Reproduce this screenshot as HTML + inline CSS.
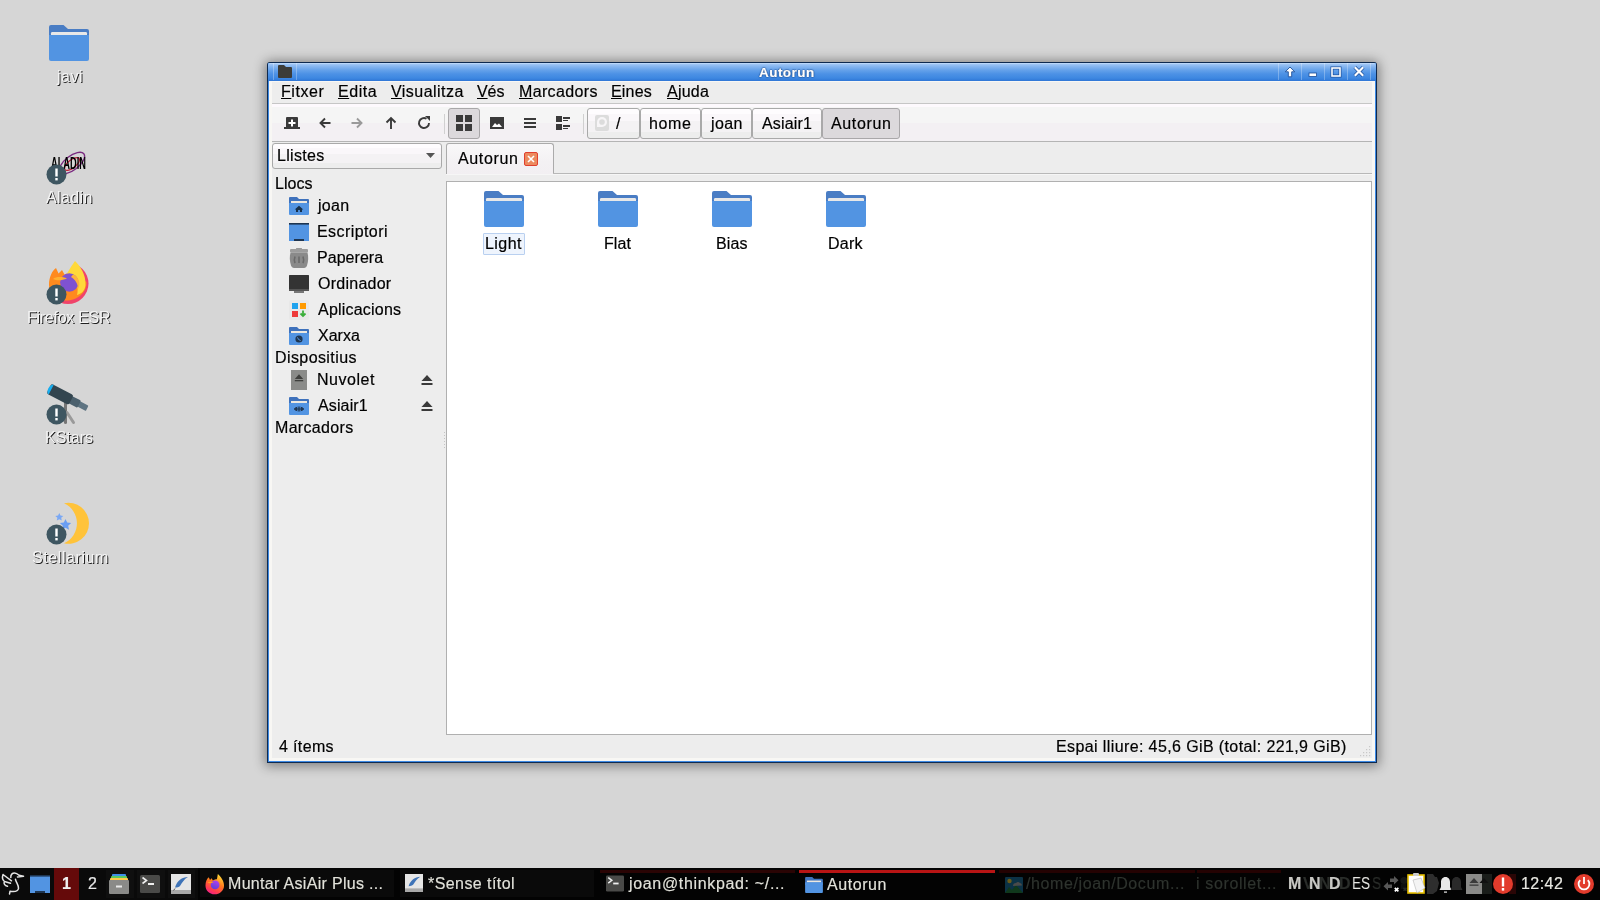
<!DOCTYPE html><html><head><meta charset="utf-8">
<style>
*{margin:0;padding:0;box-sizing:border-box}
html,body{width:1600px;height:900px;overflow:hidden;background:#d6d6d6;font-family:"Liberation Sans",sans-serif;}
.a{position:absolute}
.t{position:absolute;white-space:nowrap;font-size:16px;line-height:20px;color:#000;will-change:transform;-webkit-text-stroke:0.2px currentColor;}
svg{position:absolute;overflow:visible;will-change:transform}
#win{position:absolute;left:267px;top:62px;width:1110px;height:701px;background:#0e2a50;border-radius:3px 3px 0 0;box-shadow:0 1px 12px 2px rgba(0,0,0,0.42);}
#winb{position:absolute;left:268px;top:63px;width:1108px;height:699px;background:#3c8ae6;}
#title{position:absolute;left:268px;top:63px;width:1108px;height:18px;background:linear-gradient(#d2e6fc 0px,#a2c7f5 1px,#8ab8f1 3px,#66a2ea 7px,#4c91e5 11px,#3e88e1 15px,#2f76d6 18px);border-radius:2px 2px 0 0}
#content{position:absolute;left:269px;top:81px;width:1106px;height:680px;background:#f8f7f4;}
#inner{position:absolute;left:272px;top:82px;width:1100px;height:676px;background:#ededed;}
.ln{position:absolute;height:1px;background:#c3c3c3}
.btn{position:absolute;border:1px solid #a9a9a9;border-radius:3px;background:linear-gradient(#fefcfe 0,#fefcfe 17%,#faf7fa 17%,#faf7fa 40%,#f4f2f4 40%,#f4f2f4 80%,#ededed 80%)}
.pressed{background:#dcd9dc;border-color:#a9a7a9}
#task{position:absolute;left:0;top:868px;width:1600px;height:32px;background:linear-gradient(90deg,#0a0a0a 0,#0a0a0a 198px,#030303 198px)}
.tt{color:#e2e2da;-webkit-text-stroke:0.15px currentColor;}
.lbl{color:#f4f4f4;-webkit-text-stroke:0;text-shadow:1px 1px 0 rgba(0,0,0,0.85);}
.tsep{position:absolute;top:63px;width:1px;height:17px;background:rgba(255,255,255,0.28)}
</style></head><body>

<!-- ============ DESKTOP ICONS ============ -->
<svg style="left:49px;top:25px" width="40" height="36" viewBox="0 0 40 36"><path d="M2 0h12.5l4.5 4h19a2 2 0 0 1 2 2v8H0V2a2 2 0 0 1 2-2z" fill="#4a7dc4"></path><rect x="2" y="7" width="36" height="4" rx="1.2" fill="#e8e8e8"></rect><path d="M0 10h40v24a2 2 0 0 1-2 2H2a2 2 0 0 1-2-2z" fill="#5294e2"></path></svg>
<span class="t lbl" style="--x: 56; --b: 82; --w: 26; letter-spacing: 0.52px; left: 57px; top: 67.21px;">javi</span>

<!-- Aladin -->
<svg style="left:50px;top:148px" width="38" height="30" viewBox="0 0 38 30">
 <ellipse cx="22" cy="15" rx="15" ry="7" transform="rotate(-38 22 15)" fill="none" stroke="#7a2a80" stroke-width="1.4"></ellipse>
 <ellipse cx="22" cy="16" rx="9" ry="4" transform="rotate(-38 22 16)" fill="none" stroke="#c0203a" stroke-width="1.3"></ellipse>
 <text x="1" y="21.3" font-family="Liberation Sans" font-weight="bold" font-size="17" fill="#000" textLength="35" lengthAdjust="spacingAndGlyphs">ALADIN</text>
</svg>
<span class="t lbl" style="--x: 46; --b: 202.5; --w: 45.5; letter-spacing: 0.38px; left: 46px; top: 187.71px;">Aladin</span>

<!-- Firefox -->
<svg style="left:40px;top:255px" width="60" height="55" viewBox="0 0 60 55">
 <defs><clipPath id="ffc"><path d="M42 8H60V60H8V44z"></path></clipPath></defs>
 <circle cx="28" cy="28.5" r="20.5" fill="#f0446a" clip-path="url(#ffc)"></circle>
 <path d="M9 30C9 22 12 16 16 13L18.5 18.5 22 15 24.5 19.5C27 18 31 18 34 19L46.5 27C47 38 37 45.5 26 45.5 16 45.5 9 39 9 30Z" fill="#ff8a1e"></path>
 <path d="M35 6C40 11 46 19 45.5 30 45 36 41 39 37 40 39 33 37 22 27 18.5 30 13 33 9 35 6Z" fill="#ffd93a"></path>
 <circle cx="29.3" cy="27.5" r="9.2" fill="#7f52d0"></circle>
 <path d="M33 19.5C38 21 41 27 38.5 34 37.5 28.5 35.5 24.5 31 22Z" fill="#ffb33a"></path>
 <path d="M13 24C16 21.5 22 21.5 27 23.5 22 25.5 17 26 13 24Z" fill="#ffb030"></path>
</svg>
<span class="t lbl" style="--x: 28; --b: 322.5; --w: 82; letter-spacing: -0.27px; left: 27px; top: 307.71px;">Firefox ESR</span>

<!-- KStars -->
<svg style="left:0px;top:0px" width="100" height="440" viewBox="0 0 100 440">
 <path d="M65.5 401V422.5" stroke="#767676" stroke-width="3" stroke-linecap="round"></path>
 <path d="M67 412.5L73.5 422.5" stroke="#9a9a9a" stroke-width="3" stroke-linecap="round"></path>
 <g transform="translate(49,388.5) rotate(27.5)">
  <rect x="33" y="-3" width="10" height="6" rx="1" fill="#5e7482"></rect>
  <rect x="23" y="-4" width="11" height="8" rx="1.2" fill="#4b606d"></rect>
  <rect x="0" y="-5.5" width="25" height="11" rx="2.2" fill="#33454f"></rect>
  <path d="M2.5 -5.5A3.2 5.5 0 0 0 2.5 5.5Z" fill="#18aef0"></path>
 </g>
</svg>
<span class="t lbl" style="--x: 46; --b: 442.5; --w: 47; letter-spacing: 0px; left: 45px; top: 427.71px;">KStars</span>

<!-- Stellarium -->
<svg style="left:53px;top:502px" width="38" height="42" viewBox="0 0 38 42">
 <path d="M11 1.3A20.5 20.5 0 1 1 11 41.3A21.9 21.9 0 0 0 11 1.3Z" fill="#ffc33a"></path>
 <path transform="translate(0,2)" d="M6.3 9l1.2 2.6 2.8.3-2.1 1.9.6 2.8-2.5-1.4-2.5 1.4.6-2.8-2.1-1.9 2.8-.3z" fill="#7aa8f4"></path>
 <path transform="translate(0,1.5)" d="M12.5 15.5l1.7 3.6 3.9.5-2.9 2.7.8 3.9-3.5-2-3.5 2 .8-3.9-2.9-2.7 3.9-.5z" fill="#6a9ef2"></path>
</svg>
<span class="t lbl" style="--x: 31.5; --b: 562.5; --w: 76; letter-spacing: 0.58px; left: 31.5px; top: 547.71px;">Stellarium</span>

<!-- badges -->
<svg style="left:46px;top:164px" width="21" height="21" viewBox="0 0 21 21"><circle cx="10.5" cy="10.5" r="10" fill="#3e5661"></circle><rect x="9.3" y="4.5" width="2.4" height="8" fill="#fff"></rect><rect x="9.3" y="14" width="2.4" height="2.4" fill="#fff"></rect></svg>
<svg style="left:46px;top:284px" width="21" height="21" viewBox="0 0 21 21"><circle cx="10.5" cy="10.5" r="10" fill="#3e5661"></circle><rect x="9.3" y="4.5" width="2.4" height="8" fill="#fff"></rect><rect x="9.3" y="14" width="2.4" height="2.4" fill="#fff"></rect></svg>
<svg style="left:46px;top:404px" width="21" height="21" viewBox="0 0 21 21"><circle cx="10.5" cy="10.5" r="10" fill="#3e5661"></circle><rect x="9.3" y="4.5" width="2.4" height="8" fill="#fff"></rect><rect x="9.3" y="14" width="2.4" height="2.4" fill="#fff"></rect></svg>
<svg style="left:46px;top:524px" width="21" height="21" viewBox="0 0 21 21"><circle cx="10.5" cy="10.5" r="10" fill="#3e5661"></circle><rect x="9.3" y="4.5" width="2.4" height="8" fill="#fff"></rect><rect x="9.3" y="14" width="2.4" height="2.4" fill="#fff"></rect></svg>

<!-- ============ WINDOW ============ -->
<div id="win"></div>
<div id="winb"></div>
<div id="title"></div>
<div id="content"></div>
<div id="inner"></div>
<!-- titlebar -->
<svg style="left:278px;top:65px" width="14" height="13" viewBox="0 0 14 13"><path d="M1 0h5l2 2h5a1 1 0 0 1 1 1v9a1 1 0 0 1-1 1H1a1 1 0 0 1-1-1V1a1 1 0 0 1 1-1z" fill="#3c3c38"></path></svg>
<div class="tsep" style="left:273px"></div>
<div class="tsep" style="left:296px"></div>
<span class="t" style="--x: 759; --b: 76.8; --w: 55; font-weight: bold; font-size: 13.5px; color: rgb(255, 255, 255); -webkit-text-stroke: 0.2px rgb(255, 255, 255); text-shadow: rgb(15, 53, 112) 0px 0px 1px, rgb(15, 53, 112) 0px 0px 1px, rgb(26, 74, 144) 0px 0px 2px; letter-spacing: 0.46px; left: 759px; top: 62.84px;"><span>Autorun</span></span>
<div class="tsep" style="left:1278px"></div>
<div class="tsep" style="left:1301px"></div>
<div class="tsep" style="left:1324px"></div>
<div class="tsep" style="left:1347px"></div>
<div class="tsep" style="left:1370px"></div>
<svg style="left:1283px;top:65px" width="14" height="13" viewBox="0 0 14 13"><path d="M7 2L2.3 6.8h3v5h3.4v-5h3z" fill="#fff" stroke="#1d4f9a" stroke-width="0.9" stroke-linejoin="round"></path></svg>
<svg style="left:1307px;top:71px" width="12" height="7" viewBox="0 0 12 7"><rect x="2" y="2" width="7.5" height="3.4" fill="#fff" stroke="#1d4f9a" stroke-width="0.8"></rect></svg>
<svg style="left:1330px;top:66px" width="12" height="12" viewBox="0 0 12 12"><rect x="2" y="2" width="8" height="8" fill="none" stroke="#1d4f9a" stroke-width="3"></rect><rect x="2" y="2" width="8" height="8" fill="none" stroke="#fff" stroke-width="1.6"></rect></svg>
<svg style="left:1352px;top:65px" width="14" height="13" viewBox="0 0 14 13"><path d="M2.8 2.3l8.4 8.4M11.2 2.3l-8.4 8.4" stroke="#1d4f9a" stroke-width="3.6"></path><path d="M2.8 2.3l8.4 8.4M11.2 2.3l-8.4 8.4" stroke="#fff" stroke-width="2.2"></path></svg>

<!-- menubar -->
<span class="t" style="--x: 282.2; --b: 97; --w: 42.5; letter-spacing: 0.57px; left: 281.2px; top: 82.21px;"><u>F</u>itxer</span>
<span class="t" style="--x: 339; --b: 97; --w: 37.7; letter-spacing: 0.53px; left: 338px; top: 82.21px;"><u>E</u>dita</span>
<span class="t" style="--x: 391; --b: 97; --w: 72.4; letter-spacing: 0.46px; left: 391px; top: 82.21px;"><u>V</u>isualitza</span>
<span class="t" style="--x: 477; --b: 97; --w: 27.4; letter-spacing: -0.09px; left: 477px; top: 82.21px;"><u>V</u>és</span>
<span class="t" style="--x: 519.5; --b: 97; --w: 77.4; letter-spacing: 0.35px; left: 518.5px; top: 82.21px;"><u>M</u>arcadors</span>
<span class="t" style="--x: 612.2; --b: 97; --w: 39.7; letter-spacing: 0.17px; left: 611.2px; top: 82.21px;"><u>E</u>ines</span>
<span class="t" style="--x: 666.9; --b: 97; --w: 42; letter-spacing: 0.24px; left: 666.9px; top: 82.21px;"><u>A</u>juda</span>
<div class="ln" style="left:272px;top:103px;width:1100px;background:#c6c6c6"></div>
<!-- toolbar -->
<div class="a" style="left:272px;top:104px;width:1100px;height:37px;background:linear-gradient(#fdf9fd 0,#fdf9fd 3px,#f5f5f5 3px,#f5f5f5 19px,#f3f0f3 19px,#f3f0f3 37px)"></div>
<div class="ln" style="left:272px;top:141px;width:1100px;background:#b4b4b4"></div>
<svg style="left:284px;top:117px" width="16" height="12" viewBox="0 0 16 12"><path d="M3 0h10a1 1 0 0 1 1 1v9h2v2H0v-2h2V1a1 1 0 0 1 1-1z" fill="#3a3a3a"></path><path d="M7 2.5h2v2.5h2.5v2H9v2.5H7V7H4.5V5H7z" fill="#fff"></path></svg>
<svg style="left:319px;top:117px" width="12" height="12" viewBox="0 0 12 12"><path d="M11.5 6H1.5M6 1.5L1.5 6 6 10.5" fill="none" stroke="#3a3a3a" stroke-width="1.9"></path></svg>
<svg style="left:351px;top:117px" width="12" height="12" viewBox="0 0 12 12"><path d="M0.5 6h10M6 1.5L10.5 6 6 10.5" fill="none" stroke="#9a9a9a" stroke-width="1.9"></path></svg>
<svg style="left:385px;top:116px" width="12" height="13" viewBox="0 0 12 13"><path d="M6 13V2M1.5 6.5L6 2l4.5 4.5" fill="none" stroke="#3a3a3a" stroke-width="1.9"></path></svg>
<svg style="left:417px;top:116px" width="14" height="14" viewBox="0 0 14 14"><path d="M12 7A5 5 0 1 1 9.5 2.7" fill="none" stroke="#3a3a3a" stroke-width="1.9"></path><path d="M8 0h5v5z" fill="#3a3a3a"></path></svg>
<div class="a" style="left:444px;top:114px;width:1px;height:20px;background:#d0d0d0"></div>
<div class="btn pressed" style="left:448px;top:108px;width:32px;height:31px"></div>
<svg style="left:456px;top:115px" width="16" height="16" viewBox="0 0 16 16"><path d="M0 0h7v7H0zM9 0h7v7H9zM0 9h7v7H0zM9 9h7v7H9z" fill="#3a3a3a"></path></svg>
<svg style="left:490px;top:117px" width="14" height="12" viewBox="0 0 14 12"><path d="M0 0h14v12H0z" fill="#3a3a3a"></path><path d="M2 10l3-4 2 2 2-1.5L12 10z" fill="#fff"></path></svg>
<svg style="left:524px;top:118px" width="12" height="10" viewBox="0 0 12 10"><path d="M0 0h12v2H0zM0 4h12v2H0zM0 8h12v2H0z" fill="#3a3a3a"></path></svg>
<svg style="left:556px;top:116px" width="14" height="14" viewBox="0 0 14 14"><path d="M0 0h6v6H0zM0 8h6v6H0zM7 1h7v2H7zM7 4h5v1H7zM7 9h7v2H7zM7 12h5v1H7z" fill="#3a3a3a"></path></svg>
<div class="a" style="left:583px;top:114px;width:1px;height:20px;background:#d0d0d0"></div>
<!-- breadcrumb -->
<div class="btn" style="left:587px;top:108px;width:53px;height:31px"></div>
<svg style="left:595px;top:115px" width="14" height="16" viewBox="0 0 14 16"><rect x="0" y="0" width="14" height="16" rx="2" fill="#dcdcdc"></rect><path d="M2 7A5 5 0 1 1 7 12H2z" fill="#f7f5f7"></path><circle cx="7" cy="7" r="2.8" fill="#dcdcdc"></circle></svg>
<span class="t" style="--x: 616; --b: 129; --w: 5; left: 616px; top: 114.21px;">/</span>
<div class="btn" style="left:640px;top:108px;width:61px;height:31px"></div>
<span class="t" style="--x: 650; --b: 129; --w: 41; letter-spacing: 0.63px; left: 649px; top: 114.21px;">home</span>
<div class="btn" style="left:701px;top:108px;width:51px;height:31px"></div>
<span class="t" style="--x: 710; --b: 129; --w: 31.5; letter-spacing: 0.38px; left: 711px; top: 114.21px;">joan</span>
<div class="btn" style="left:752px;top:108px;width:70px;height:31px"></div>
<span class="t" style="--x: 761.5; --b: 129; --w: 50; letter-spacing: 0.17px; left: 761.5px; top: 114.21px;">Asiair1</span>
<div class="btn pressed" style="left:822px;top:108px;width:78px;height:31px"></div>
<span class="t" style="--x: 831; --b: 129; --w: 59; letter-spacing: 0.64px; left: 831px; top: 114.21px;">Autorun</span>

<!-- side pane -->
<div class="btn" style="left:272px;top:143px;width:170px;height:26px"></div>
<span class="t" style="--x: 277.5; --b: 161; --w: 46.3; letter-spacing: 0.32px; left: 276.5px; top: 146.21px;">Llistes</span>
<svg style="left:426px;top:153px" width="9" height="5" viewBox="0 0 9 5"><path d="M0 0h9L4.5 5z" fill="#555"></path></svg>
<span class="t" style="--x: 275.7; --b: 188.7; --w: 36.5; letter-spacing: 0.04px; left: 274.7px; top: 173.91px;">Llocs</span>
<!-- joan (home folder) -->
<svg style="left:289px;top:197px" width="20" height="18" viewBox="0 0 20 18"><path d="M1 0h7l2 2h9a1 1 0 0 1 1 1v6H0V1a1 1 0 0 1 1-1z" fill="#3f72bc"></path><rect x="2" y="4" width="16" height="2.2" fill="#ece8e0"></rect><path d="M0 6h20v11a1 1 0 0 1-1 1H1a1 1 0 0 1-1-1z" fill="#5294e2"></path><path d="M10 8.8l-4.3 3.6h1.3V15h2.1v-2h1.8v2h2.1v-2.6h1.3z" fill="#17304a"></path></svg>
<span class="t" style="--x: 317.3; --b: 210.7; --w: 31.2; letter-spacing: 0.28px; left: 318.3px; top: 195.91px;">joan</span>
<!-- Escriptori -->
<svg style="left:289px;top:223px" width="20" height="18" viewBox="0 0 20 18"><rect x="0" y="0" width="20" height="18" fill="#5294e2"></rect><rect x="0" y="0" width="20" height="1.6" fill="#1e3550"></rect><rect x="5" y="16" width="10" height="2" fill="#1e3550"></rect></svg>
<span class="t" style="--x: 317.8; --b: 236.8; --w: 68.9; letter-spacing: 0.42px; left: 316.8px; top: 222.01px;">Escriptori</span>
<!-- Paperera -->
<svg style="left:290px;top:248px" width="18" height="20" viewBox="0 0 18 20"><rect x="6" y="0" width="6" height="1.5" rx="0.5" fill="#9a9a9a"></rect><rect x="0" y="1" width="18" height="3.5" rx="1" fill="#9c9c9c"></rect><path d="M0.5 4.5h17C18.5 8 18.5 13 17 17.5 16.5 19 15.5 20 14 20H4C2.5 20 1.5 19 1 17.5-0.5 13-0.5 8 0.5 4.5z" fill="#8a8a8a"></path><path d="M5 8.5q-1.3 3.3 0 6.6M9 8.5v6.6M13 8.5q1.3 3.3 0 6.6" stroke="#6a6a6a" stroke-width="1.6" fill="none"></path></svg>
<span class="t" style="--x: 317.8; --b: 262.6; --w: 65.2; letter-spacing: 0.04px; left: 316.8px; top: 247.81px;">Paperera</span>
<!-- Ordinador -->
<svg style="left:289px;top:275px" width="20" height="18" viewBox="0 0 20 18"><rect x="0" y="0" width="20" height="16" rx="0.5" fill="#333"></rect><rect x="0" y="14" width="20" height="2" fill="#555"></rect><rect x="5" y="16" width="10" height="2" fill="#777"></rect></svg>
<span class="t" style="--x: 317.8; --b: 288.5; --w: 73.8; letter-spacing: 0.25px; left: 317.8px; top: 273.71px;">Ordinador</span>
<!-- Aplicacions -->
<svg style="left:289px;top:300px" width="20" height="20" viewBox="0 0 20 20"><rect x="0" y="0" width="20" height="20" rx="2" fill="#e8e8e8"></rect><rect x="3" y="3" width="6" height="6" fill="#1fa2ee"></rect><rect x="11" y="3" width="6" height="6" fill="#ff9a00"></rect><rect x="3" y="11" width="6" height="6" fill="#ee3a3a"></rect><path d="M14 10.5v5M11.5 13.5l2.5 2.5 2.5-2.5" stroke="#3aae3a" stroke-width="1.8" fill="none"></path></svg>
<span class="t" style="--x: 317.7; --b: 314.8; --w: 83; letter-spacing: 0.21px; left: 317.7px; top: 300.01px;">Aplicacions</span>
<!-- Xarxa -->
<svg style="left:289px;top:327px" width="20" height="18" viewBox="0 0 20 18"><path d="M1 0h7l2 2h9a1 1 0 0 1 1 1v6H0V1a1 1 0 0 1 1-1z" fill="#3f72bc"></path><rect x="2" y="4" width="16" height="2.2" fill="#ece8e0"></rect><path d="M0 6h20v11a1 1 0 0 1-1 1H1a1 1 0 0 1-1-1z" fill="#5294e2"></path><circle cx="10" cy="12" r="3.6" fill="#1e3550"></circle><path d="M8 10.5q1.5 .5 1.5 2 1.5 0 2 1.5" stroke="#5294e2" stroke-width="0.9" fill="none"></path></svg>
<span class="t" style="--x: 317.7; --b: 340.8; --w: 41.9; letter-spacing: 0px; left: 317.7px; top: 326.01px;">Xarxa</span>
<span class="t" style="--x: 275.5; --b: 362.8; --w: 80.5; letter-spacing: 0.41px; left: 274.5px; top: 348.01px;">Dispositius</span>
<!-- Nuvolet -->
<svg style="left:291px;top:370px" width="16" height="20" viewBox="0 0 16 20"><rect x="0" y="0" width="16" height="20" fill="#8a8b89"></rect><path d="M8 4.2L3.8 9h8.4z" fill="#3e3f3d"></path><rect x="3.8" y="10" width="8.4" height="1.3" fill="#3e3f3d"></rect></svg>
<span class="t" style="--x: 317.7; --b: 384.9; --w: 57; letter-spacing: 0.53px; left: 316.7px; top: 370.11px;">Nuvolet</span>
<svg style="left:421px;top:375px" width="12" height="11" viewBox="0 0 12 11"><path d="M6 0L0.5 6h11z" fill="#3a3a3a"></path><rect x="0.5" y="8" width="11" height="2" fill="#3a3a3a"></rect></svg>
<!-- Asiair1 -->
<svg style="left:289px;top:397px" width="20" height="18" viewBox="0 0 20 18"><path d="M1 0h7l2 2h9a1 1 0 0 1 1 1v6H0V1a1 1 0 0 1 1-1z" fill="#3f72bc"></path><rect x="2" y="4" width="16" height="2.2" fill="#ece8e0"></rect><path d="M0 6h20v11a1 1 0 0 1-1 1H1a1 1 0 0 1-1-1z" fill="#5294e2"></path><path d="M5 12h10M9.2 9.5v5M10.8 9.5v5M5.5 12l2-2v4zM14.5 12l-2-2v4z" stroke="#1e3550" stroke-width="1" fill="#1e3550"></path></svg>
<span class="t" style="--x: 317.7; --b: 410.6; --w: 49.8; letter-spacing: 0.13px; left: 317.7px; top: 395.81px;">Asiair1</span>
<svg style="left:421px;top:401px" width="12" height="11" viewBox="0 0 12 11"><path d="M6 0L0.5 6h11z" fill="#3a3a3a"></path><rect x="0.5" y="8" width="11" height="2" fill="#3a3a3a"></rect></svg>
<span class="t" style="--x: 275.5; --b: 432.6; --w: 77.1; letter-spacing: 0.32px; left: 274.5px; top: 417.81px;">Marcadors</span>


<!-- tabs -->
<div class="a" style="left:446px;top:143px;width:108px;height:31px;border:1px solid #ababab;border-bottom:none;border-radius:3px 3px 0 0;background:linear-gradient(#f9f8f9,#f3f1f3 60%,#f2eff2)"></div>
<div class="ln" style="left:553px;top:173px;width:819px;background:#b8b8b8"></div><div class="ln" style="left:446px;top:174px;width:926px;background:#f6f6f6"></div>
<span class="t" style="--x: 458; --b: 164; --w: 59; letter-spacing: 0.64px; left: 458px; top: 149.21px;">Autorun</span>
<svg style="left:524px;top:152px" width="14" height="14" viewBox="0 0 14 14"><rect x="0.5" y="0.5" width="13" height="13" rx="1.5" fill="#ec8a5e" stroke="#e0402e"></rect><path d="M4 4l6 6M10 4l-6 6" stroke="#fff" stroke-width="1.6"></path></svg>

<!-- view -->
<div class="a" style="left:446px;top:181px;width:926px;height:554px;background:#fff;border:1px solid #b0b0b0"></div>
<svg style="left:484px;top:191px" width="40" height="36" viewBox="0 0 40 36"><path d="M2 0h12.5l4.5 4h19a2 2 0 0 1 2 2v8H0V2a2 2 0 0 1 2-2z" fill="#4a7dc4"></path><rect x="2" y="7" width="36" height="4" rx="1.2" fill="#e8e8e8"></rect><path d="M0 10h40v24a2 2 0 0 1-2 2H2a2 2 0 0 1-2-2z" fill="#5294e2"></path></svg>
<svg style="left:598px;top:191px" width="40" height="36" viewBox="0 0 40 36"><path d="M2 0h12.5l4.5 4h19a2 2 0 0 1 2 2v8H0V2a2 2 0 0 1 2-2z" fill="#4a7dc4"></path><rect x="2" y="7" width="36" height="4" rx="1.2" fill="#e8e8e8"></rect><path d="M0 10h40v24a2 2 0 0 1-2 2H2a2 2 0 0 1-2-2z" fill="#5294e2"></path></svg>
<svg style="left:712px;top:191px" width="40" height="36" viewBox="0 0 40 36"><path d="M2 0h12.5l4.5 4h19a2 2 0 0 1 2 2v8H0V2a2 2 0 0 1 2-2z" fill="#4a7dc4"></path><rect x="2" y="7" width="36" height="4" rx="1.2" fill="#e8e8e8"></rect><path d="M0 10h40v24a2 2 0 0 1-2 2H2a2 2 0 0 1-2-2z" fill="#5294e2"></path></svg>
<svg style="left:826px;top:191px" width="40" height="36" viewBox="0 0 40 36"><path d="M2 0h12.5l4.5 4h19a2 2 0 0 1 2 2v8H0V2a2 2 0 0 1 2-2z" fill="#4a7dc4"></path><rect x="2" y="7" width="36" height="4" rx="1.2" fill="#e8e8e8"></rect><path d="M0 10h40v24a2 2 0 0 1-2 2H2a2 2 0 0 1-2-2z" fill="#5294e2"></path></svg>
<div class="a" style="left:483px;top:233px;width:42px;height:22px;border:1px solid #b9d0f0;background:#eef4fd;border-radius:1px"></div>
<span class="t" style="--x: 486; --b: 249; --w: 36; letter-spacing: 0.44px; left: 485px; top: 234.21px;">Light</span>
<span class="t" style="--x: 604.5; --b: 249; --w: 26.5; letter-spacing: 0.09px; left: 603.5px; top: 234.21px;">Flat</span>
<span class="t" style="--x: 716.5; --b: 249; --w: 30.5; letter-spacing: 0.13px; left: 715.5px; top: 234.21px;">Bias</span>
<span class="t" style="--x: 829; --b: 249; --w: 34.5; letter-spacing: 0.24px; left: 828px; top: 234.21px;">Dark</span>


<!-- splitter dots -->
<div class="a" style="left:444px;top:432px;width:1px;height:18px;background:repeating-linear-gradient(#c4c4c4 0 1px,transparent 1px 3px)"></div>

<!-- status -->
<span class="t" style="--x: 278.6; --b: 752; --w: 54.6; letter-spacing: 0.36px; left: 278.6px; top: 737.21px;">4 ítems</span>
<span class="t" style="--x: 1057; --b: 752; --w: 289; letter-spacing: 0.39px; left: 1056px; top: 737.21px;">Espai lliure: 45,6 GiB (total: 221,9 GiB)</span>
<svg style="left:1360px;top:746px" width="12" height="12" viewBox="0 0 12 12" fill="#c8c8c8"><rect x="9" y="0" width="1.2" height="1.2"></rect><rect x="6" y="3" width="1.2" height="1.2"></rect><rect x="9" y="3" width="1.2" height="1.2"></rect><rect x="3" y="6" width="1.2" height="1.2"></rect><rect x="6" y="6" width="1.2" height="1.2"></rect><rect x="9" y="6" width="1.2" height="1.2"></rect><rect x="0" y="9" width="1.2" height="1.2"></rect><rect x="3" y="9" width="1.2" height="1.2"></rect><rect x="6" y="9" width="1.2" height="1.2"></rect><rect x="9" y="9" width="1.2" height="1.2"></rect></svg>


<!-- ============ TASKBAR ============ -->
<div id="task"></div>
<!-- start logo -->
<svg style="left:0px;top:868px" width="30" height="30" viewBox="0 0 30 30"><g fill="none" stroke="#e4e4e4" stroke-width="1.5" stroke-linecap="round" stroke-linejoin="round">
 <path d="M10.8 9.5C10.5 6.5 12.5 5 14.5 5 16.5 5 18 6.3 19 7.3L23.5 8.3 17.5 9"></path>
 <path d="M15.5 11.3C16 14.5 19 17 18.5 20.5 18 23.5 14.5 24 10 23.3L9.5 26"></path>
 <path d="M3 6.5L11.5 12.8M3 6.5C2 9.5 2.5 12 4.5 13.5 3.2 15.5 4.8 17.8 7.5 18.3M4.5 13.5L10.5 15.3"></path>
</g></svg>
<!-- show desktop -->
<svg style="left:30px;top:875px" width="20" height="18" viewBox="0 0 20 18"><rect x="0" y="0" width="20" height="18" fill="#5294e2"></rect><rect x="0" y="0" width="20" height="1.6" fill="#1e3550"></rect><rect x="5" y="16" width="10" height="2" fill="#1e3550"></rect></svg>
<div class="a" style="left:54px;top:868px;width:25px;height:32px;background:#650a0a"></div>
<span class="t" style="--x: 62.5; --b: 889; --w: 8; color: rgb(240, 240, 240); font-weight: bold; left: 61.5px; top: 874.21px;">1</span>
<span class="t" style="--x: 87.5; --b: 889; --w: 7.5; color: rgb(232, 232, 232); left: 87.5px; top: 874.21px;">2</span>
<!-- launchers -->
<div class="a" style="left:106px;top:870px;width:28px;height:28px;background:#0f0f0f"></div>
<div class="a" style="left:137px;top:870px;width:28px;height:28px;background:#0f0f0f"></div>
<div class="a" style="left:168px;top:870px;width:27px;height:28px;background:#0f0f0f"></div>
<svg style="left:109px;top:874px" width="20" height="20" viewBox="0 0 20 20"><rect x="3" y="0" width="14" height="3" rx="1" fill="#3f8fe8"></rect><rect x="2" y="2" width="16" height="3" rx="1" fill="#5cc85c"></rect><rect x="1" y="4" width="18" height="3" rx="1" fill="#ffc84a"></rect><rect x="0" y="6" width="20" height="14" rx="1" fill="#8a8a88"></rect><rect x="7" y="11.5" width="6" height="2" fill="#e8e8e8"></rect></svg>
<svg style="left:140px;top:875px" width="20" height="18" viewBox="0 0 20 18"><rect x="0" y="0" width="20" height="18" rx="1.5" fill="#4a4a48"></rect><path d="M2.5 2.5l4 3-4 3" stroke="#eee" stroke-width="1.6" fill="none"></path><rect x="8" y="8" width="6" height="2" fill="#eee"></rect></svg>
<svg style="left:171px;top:874px" width="20" height="20" viewBox="0 0 20 20"><rect x="0" y="0" width="20" height="20" fill="#e6e6e6"></rect><rect x="0" y="16" width="20" height="4" fill="#a9a9a9"></rect><path d="M4 13.5C6 7 11 3 17 3 13 5 11 9 9 12 8 13 6 13.5 4 13.5z" fill="#3f74b8"></path><path d="M4 14.5l-1.5 2" stroke="#555" stroke-width="1"></path></svg>
<!-- tasks -->
<div class="a" style="left:200px;top:870px;width:194px;height:27px;background:#0a0a0a"></div>
<svg style="left:205px;top:874px" width="20" height="20" viewBox="8 6 42 42">
 <defs><linearGradient id="ffg" x1="0.8" y1="0" x2="0.3" y2="1"><stop offset="0" stop-color="#ffe83a"></stop><stop offset="0.45" stop-color="#ff7a1e"></stop><stop offset="0.8" stop-color="#ff3a50"></stop><stop offset="1" stop-color="#f0208a"></stop></linearGradient>
 <linearGradient id="ffp" x1="0.7" y1="0" x2="0.3" y2="1"><stop offset="0" stop-color="#b040f0"></stop><stop offset="1" stop-color="#5a40d8"></stop></linearGradient></defs>
 <path d="M9 30C9 22 12 16 16 13L18.5 18.5 22 15 24.5 19.5C27 18 31 17 33 17L35 6C41 12 48 20 48 30 48 41 39 48.5 28 48.5 17 48.5 9 40 9 30Z" fill="url(#ffg)"></path>
 <circle cx="29.3" cy="29" r="9.2" fill="url(#ffp)"></circle>
 <path d="M13 24C16 21.5 22 21.5 27 23.5 22 25.5 17 26 13 24Z" fill="#ffa020"></path>
</svg>
<span class="t tt" style="--x: 228.5; --b: 889; --w: 153.5; letter-spacing: 0.31px; left: 227.5px; top: 874.21px;">Muntar AsiAir Plus ...</span>
<div class="a" style="left:400px;top:870px;width:194px;height:27px;background:#0a0a0a"></div>
<svg style="left:405px;top:874px" width="18" height="18" viewBox="0 0 20 20"><rect x="0" y="0" width="20" height="20" fill="#e6e6e6"></rect><rect x="0" y="16" width="20" height="4" fill="#a9a9a9"></rect><path d="M4 13.5C6 7 11 3 17 3 13 5 11 9 9 12 8 13 6 13.5 4 13.5z" fill="#3f74b8"></path></svg>
<span class="t tt" style="--x: 428; --b: 889; --w: 86; letter-spacing: 0.43px; left: 428px; top: 874.21px;">*Sense títol</span>
<div class="a" style="left:600px;top:870px;width:195px;height:3px;background:#2a0404"></div>
<svg style="left:606px;top:875px" width="18" height="17" viewBox="0 0 20 18"><rect x="0" y="0" width="20" height="18" rx="1.5" fill="#4a4a48"></rect><path d="M2.5 2.5l4 3-4 3" stroke="#eee" stroke-width="1.6" fill="none"></path><rect x="8" y="8" width="6" height="2" fill="#eee"></rect></svg>
<span class="t tt" style="--x: 628; --b: 889; --w: 155; letter-spacing: 0.66px; left: 629px; top: 874.21px;">joan@thinkpad: ~/...</span>
<div class="a" style="left:799px;top:870px;width:196px;height:3px;background:#b81414"></div>
<svg style="left:805px;top:877px" width="18" height="16" viewBox="0 0 20 18"><path d="M1 0h7l2 2h9a1 1 0 0 1 1 1v6H0V1a1 1 0 0 1 1-1z" fill="#3f72bc"></path><rect x="2" y="4" width="16" height="2.2" fill="#ece8e0"></rect><path d="M0 6h20v11a1 1 0 0 1-1 1H1a1 1 0 0 1-1-1z" fill="#5294e2"></path></svg>
<span class="t tt" style="--x: 826.5; --b: 889.5; --w: 58.5; letter-spacing: 0.56px; left: 826.5px; top: 874.71px;">Autorun</span>
<div class="a" style="left:999px;top:870px;width:196px;height:3px;background:#240202"></div>
<div class="a" style="left:1197px;top:870px;width:84px;height:3px;background:#240202"></div>
<svg style="left:1005px;top:877px" width="18" height="16" viewBox="0 0 18 16"><rect x="0" y="0" width="18" height="16" rx="1" fill="#0c3246"></rect><circle cx="4.5" cy="4" r="2.2" fill="#6a5a1a"></circle><path d="M0 16l4-6 3 3 4-5 7 8z" fill="#10381c"></path><path d="M8 9q0-3 3-3 2-2 4 0 2 0 2 2.5z" fill="#4a4a4a"></path></svg>
<span class="t" style="--x: 1026; --b: 889; --w: 157; color: rgb(46, 51, 46); letter-spacing: 0.6px; left: 1026px; top: 874.21px;">/home/joan/Docum...</span>
<span class="t" style="--x: 1197; --b: 889; --w: 78; color: rgb(46, 51, 46); letter-spacing: 0.63px; left: 1196px; top: 874.21px;">i sorollet...</span>
<!-- tray -->
<span class="t" style="--x: 1289; --b: 889; --w: 14; font-weight: bold; color: rgb(200, 200, 196); left: 1288px; top: 874.21px;">M</span>
<span class="t" style="--x: 1303; --b: 889; --w: 7; font-weight: bold; color: rgb(42, 45, 42); left: 1303px; top: 874.21px;">V</span>
<span class="t" style="--x: 1310; --b: 889; --w: 10; font-weight: bold; color: rgb(200, 200, 196); left: 1309px; top: 874.21px;">N</span>
<span class="t" style="--x: 1320; --b: 889; --w: 9; font-weight: bold; color: rgb(42, 45, 42); left: 1319px; top: 874.21px;">N</span>
<span class="t" style="--x: 1330; --b: 889; --w: 10; font-weight: bold; color: rgb(200, 200, 196); left: 1329px; top: 874.21px;">D</span>
<span class="t" style="--x: 1340; --b: 889; --w: 10; font-weight: bold; color: rgb(42, 45, 42); left: 1339px; top: 874.21px;">D</span>
<span class="t" style="--x: 1353; --b: 889; color: rgb(232, 232, 228); font-size: 16px; transform: scaleX(0.84); transform-origin: 0px 0px; -webkit-text-stroke: 0px; left: 1352px; top: 874.21px;">ES</span>
<span class="t" style="--x: 1371.5; --b: 889; color: rgb(42, 45, 42); font-size: 16px; transform: scaleX(0.84); transform-origin: 0px 0px; left: 1371.5px; top: 874.21px;">S</span>
<svg style="left:1383px;top:876px" width="26" height="17" viewBox="0 0 26 17"><path d="M7 2.5h4V0l4.5 4.25L11 8.5V6H7z" fill="#585858"></path><path d="M9 8.5H5V6L0.5 10.25 5 14.5V12h4z" fill="#585858"></path><path d="M11.8 11.8l3.6 3.6M15.4 11.8l-3.6 3.6" stroke="#fff" stroke-width="1.7"></path><circle cx="21" cy="4.5" r="3.6" fill="#141614"></circle><path d="M18 8h5v5h-5z" fill="#0d0f0d"></path><path d="M20.5 11.8l3 3M23.5 11.8l-3 3" stroke="#262926" stroke-width="1.6"></path></svg>
<svg style="left:1407px;top:873px" width="32" height="21" viewBox="0 0 32 21"><path d="M20 1h6l2 3h2l2 6-2 8-4 3h-6z" fill="#2e2e2e"></path><rect x="1" y="2" width="16" height="18" fill="#fff" stroke="#e8c000" stroke-width="1.6"></rect><rect x="6" y="0" width="6" height="3" rx="1" fill="#ccc"></rect><path d="M6 7l8-2 4 10-8 5z" fill="#f4f4f4" stroke="#aaa" stroke-width="0.5"></path></svg>
<svg style="left:1440px;top:877px" width="22" height="16" viewBox="0 0 22 16"><path d="M5.5 0c3 0 4.5 2.5 4.5 5v5l1.5 3H-0.5L1 10V5c0-2.5 1.5-5 4.5-5z" fill="#e8e8e8"></path><path d="M16.5 0c3 0 4.5 2.5 4.5 5v5l1.5 3h-12L12 10V5c0-2.5 1.5-5 4.5-5z" fill="#2a2a2a"></path><rect x="4" y="14.5" width="3" height="1.2" fill="#e8e8e8"></rect></svg>
<div class="a" style="left:1466px;top:874px;width:16px;height:20px;background:#8a8a88"></div>
<div class="a" style="left:1482px;top:874px;width:10px;height:20px;background:#1a1d1a"></div>
<svg style="left:1469px;top:878px" width="20" height="10" viewBox="0 0 20 10"><path d="M5 0l-4.5 5h9z" fill="#3a3a3a"></path><rect x="0.5" y="6.5" width="9" height="1.3" fill="#3a3a3a"></rect><path d="M15 0l-4.5 5h9z" fill="#111"></path></svg>
<div class="a" style="left:1509px;top:874px;width:7px;height:20px;background:#2a0606"></div>
<svg style="left:1493px;top:874px" width="20" height="20" viewBox="0 0 20 20"><circle cx="10" cy="10" r="10" fill="#e23b2c"></circle><rect x="8.8" y="3.5" width="2.4" height="9" fill="#fff"></rect><rect x="8.8" y="14" width="2.4" height="2.6" fill="#fff"></rect></svg>
<span class="t" style="--x: 1522; --b: 889; --w: 41; color: rgb(232, 232, 226); letter-spacing: 0.46px; left: 1521px; top: 874.21px;">12:42</span>
<svg style="left:1574px;top:874px" width="20" height="20" viewBox="0 0 20 20"><circle cx="10" cy="10" r="10" fill="#e23b2c"></circle><path d="M6.2 6.2A5.4 5.4 0 1 0 13.8 6.2" fill="none" stroke="#fff" stroke-width="1.8"></path><rect x="9.1" y="3" width="1.8" height="7" fill="#fff"></rect></svg>




</body></html>
